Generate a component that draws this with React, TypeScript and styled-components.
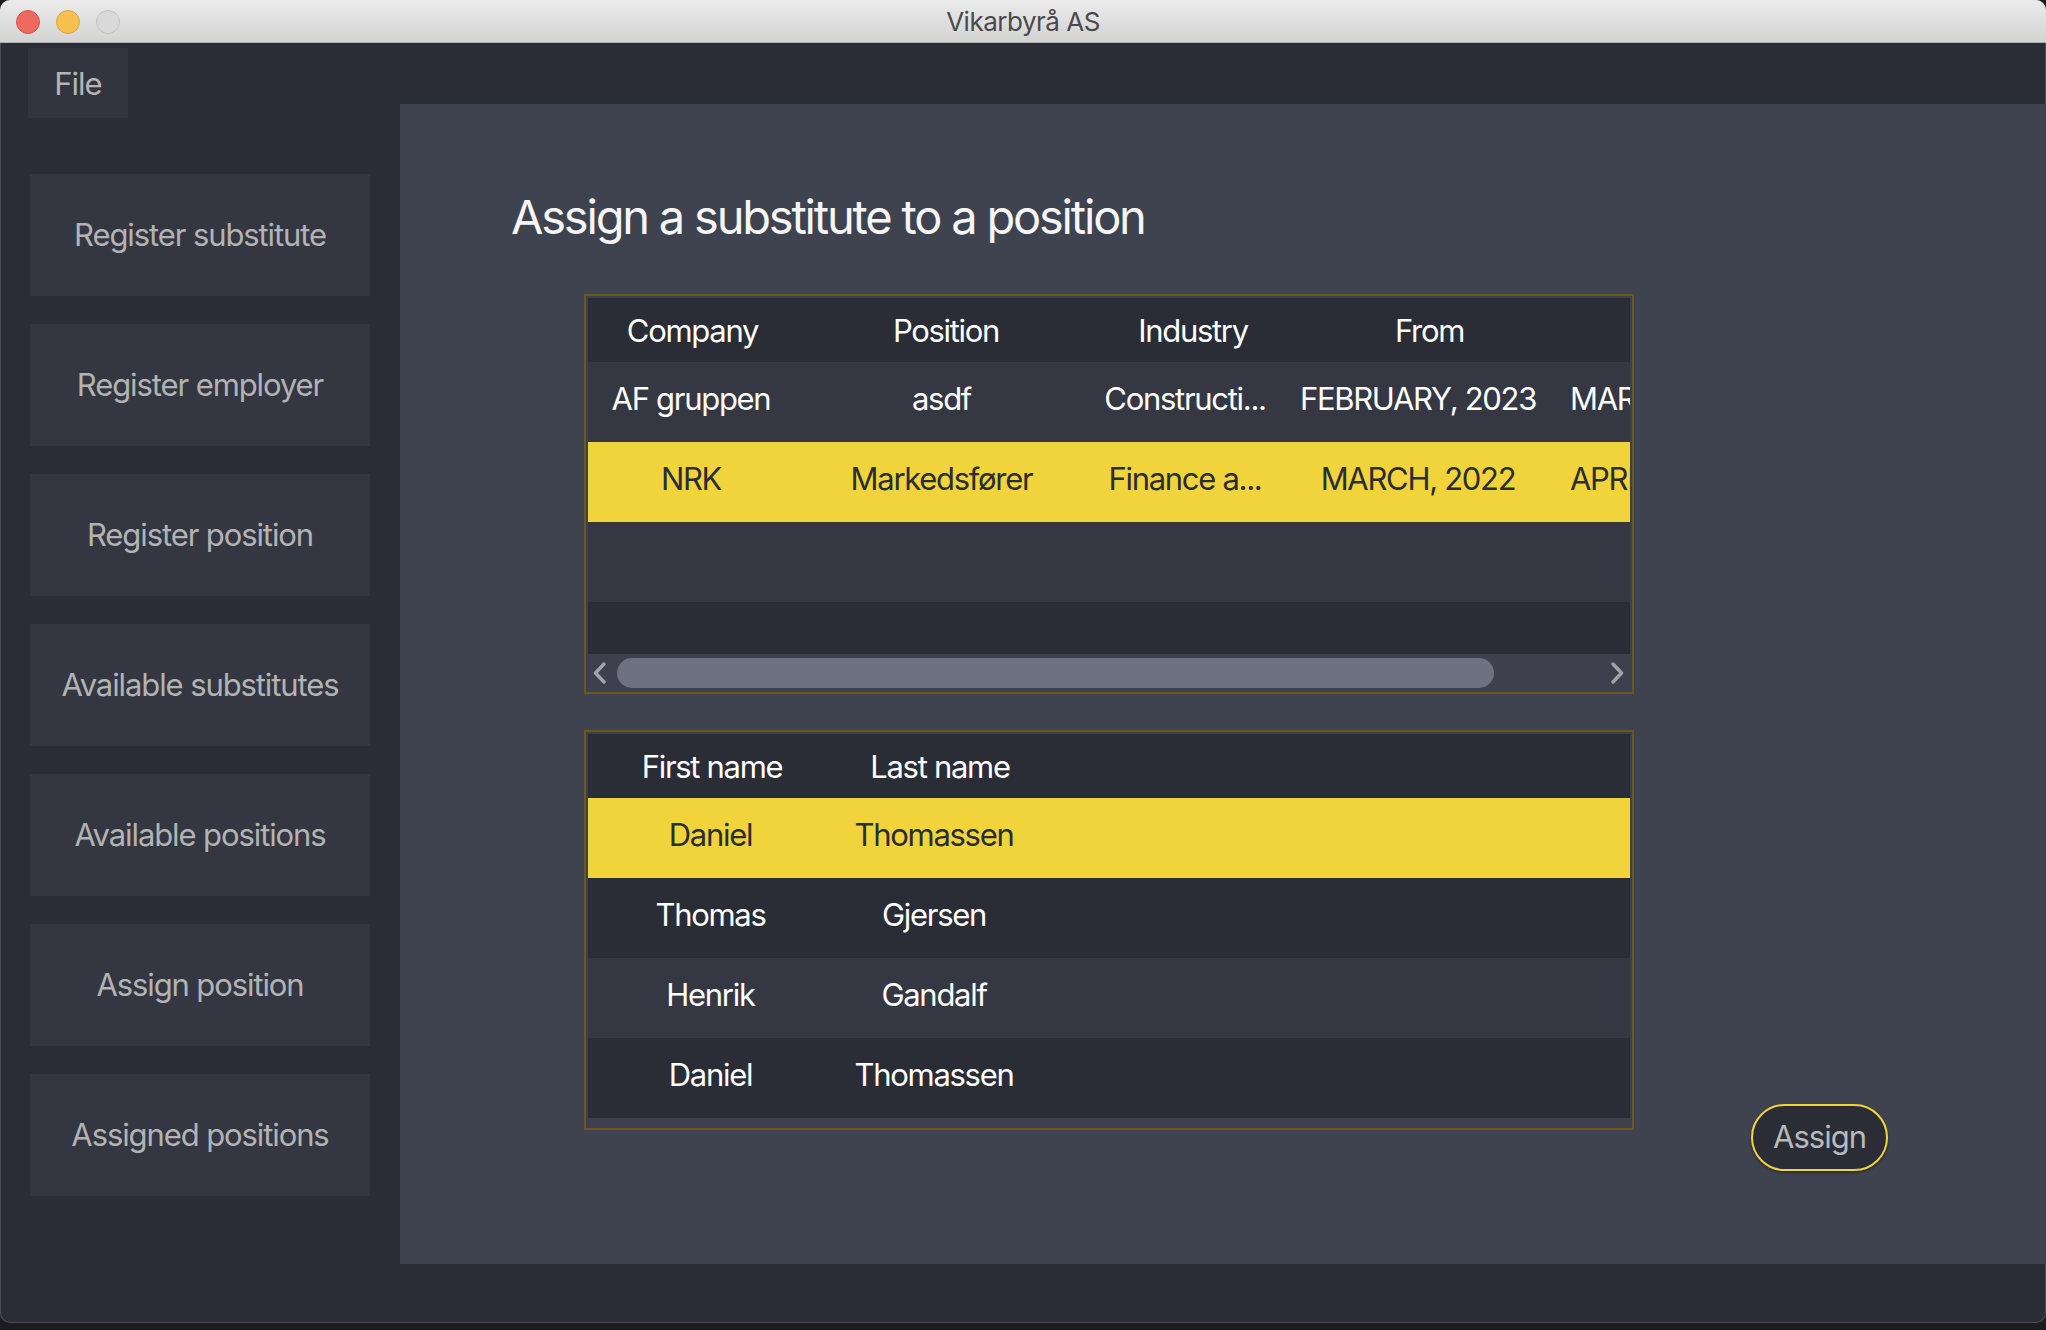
import React from "react"
import styled, { createGlobalStyle } from "styled-components"

const GlobalStyle = createGlobalStyle`
  html, body {
    margin: 0;
    padding: 0;
    background: #1c1c1e;
  }
  body {
    font-family: Inter, "Noto Sans", "Liberation Sans", sans-serif;
    -webkit-font-smoothing: antialiased;
  }
`

const Window = styled.div`
  width: 2046px;
  height: 1323px;
  display: flex;
  flex-direction: column;
  background: #2a2d36;
  border-radius: 10px;
  overflow: hidden;
  box-shadow: inset 0 0 0 1px #4b4e57;
`

const TitleBar = styled.div`
  height: 43px;
  flex-shrink: 0;
  display: grid;
  grid-template-columns: 1fr auto 1fr;
  align-items: center;
  padding-top: 1px;
  background: linear-gradient(#ebebeb, #d3d3d3);
  border-bottom: 1px solid #b1b1b1;
  box-sizing: border-box;
`

const Lights = styled.div`
  display: flex;
  gap: 16px;
  padding-left: 16px;
`

const Light = styled.span<{ $fill: string; $edge: string }>`
  width: 24px;
  height: 24px;
  border-radius: 50%;
  box-sizing: border-box;
  background: ${(p) => p.$fill};
  border: 1px solid ${(p) => p.$edge};
`

const WindowTitle = styled.div`
  font-size: 26px;
  color: #4a4a4a;
  letter-spacing: -0.5px;
`

const Body = styled.div`
  flex: 1;
  display: flex;
  align-items: flex-start;
`

const LeftColumn = styled.div`
  width: 400px;
  flex-shrink: 0;
  box-sizing: border-box;
  padding: 5px 0 0 28px;
`

const MenuItem = styled.div`
  width: 100px;
  height: 70px;
  display: flex;
  align-items: center;
  justify-content: center;
  background: #32353f;
  color: #b5b5b5;
  font-size: 31px;
  letter-spacing: -1px;
`

const Nav = styled.nav`
  margin: 56px 0 0 2px;
  display: flex;
  flex-direction: column;
  gap: 28px;
`

const NavButton = styled.div`
  width: 340px;
  height: 122px;
  display: flex;
  align-items: center;
  justify-content: center;
  padding-bottom: 2px;
  box-sizing: border-box;
  background: #343742;
  color: #b3b3b3;
  font-size: 31px;
  letter-spacing: -1.1px;
`

const Main = styled.main`
  flex: 1;
  height: 1160px;
  margin-top: 61px;
  box-sizing: border-box;
  padding: 89px 0 0 111px;
  background: #3f4350;
`

const Heading = styled.h1`
  margin: 0;
  font-size: 47px;
  line-height: 48px;
  font-weight: 400;
  color: #f5f5f5;
  letter-spacing: -2.2px;
`

const ContentRow = styled.div`
  display: flex;
  align-items: flex-end;
  margin: 53px 0 0 73px;
`

const Tables = styled.div`
  display: flex;
  flex-direction: column;
  gap: 36px;
  margin-bottom: 41px;
`

const TableFrame = styled.div`
  width: 1050px;
  height: 400px;
  box-sizing: border-box;
  border: 2px solid #685a1b;
  padding: 2px;
  background: #3e414d;
  display: flex;
  flex-direction: column;
  overflow: hidden;
`

const Rows = styled.div`
  flex: 1;
  overflow: hidden;
`

const Row = styled.div<{ $tone: "head" | "light" | "dark" | "selected" }>`
  height: ${(p) => (p.$tone === "head" ? 64 : 80)}px;
  box-sizing: border-box;
  padding-bottom: ${(p) => (p.$tone === "head" ? 0 : 7)}px;
  display: flex;
  align-items: center;
  white-space: nowrap;
  background: ${(p) =>
    p.$tone === "selected"
      ? "#f1d33b"
      : p.$tone === "light"
      ? "#353843"
      : "#2a2d36"};
  color: ${(p) => (p.$tone === "selected" ? "#2b2d35" : "#ffffff")};
  font-size: 31px;
  letter-spacing: -1.3px;
`

const Cell = styled.div<{ $w: number; $start?: boolean }>`
  width: ${(p) => p.$w}px;
  flex-shrink: 0;
  box-sizing: border-box;
  text-align: ${(p) => (p.$start ? "left" : "center")};
  padding-left: ${(p) => (p.$start ? 15 : 0)}px;
  overflow: hidden;
`

const ScrollBar = styled.div`
  height: 36px;
  flex-shrink: 0;
  display: flex;
  align-items: center;
  padding: 2px 6px 0 5px;
  box-sizing: border-box;
`

const Track = styled.div`
  flex: 1;
  margin: 0 8px 0 11px;
`

const Thumb = styled.div`
  width: 877px;
  height: 30px;
  border-radius: 15px;
  background: #6e7280;
`

const AssignButton = styled.button`
  width: 137px;
  height: 67px;
  margin-left: 117px;
  box-sizing: border-box;
  border: 2.5px solid #f1d33b;
  border-radius: 34px;
  background: #2a2d36;
  color: #b9b9b9;
  font-family: inherit;
  font-size: 31px;
  letter-spacing: -1px;
  padding: 0 0 2px;
  box-shadow: 0 2px 3px rgba(0, 0, 0, 0.35);
`

const Chevron = ({ dir }: { dir: "left" | "right" }) => (
  <svg width="13" height="22" viewBox="0 0 13 22">
    <polyline
      points={dir === "left" ? "11,2 2.5,11 11,20" : "2,2 10.5,11 2,20"}
      fill="none"
      stroke="#a3a4a8"
      strokeWidth="3.4"
      strokeLinecap="round"
      strokeLinejoin="round"
    />
  </svg>
)

const navItems = [
  "Register substitute",
  "Register employer",
  "Register position",
  "Available substitutes",
  "Available positions",
  "Assign position",
  "Assigned positions",
]

const posHead = [209, 298, 196, 277, 220]
const posCols = [206, 295, 192, 274, 222]
const positions = [
  ["AF gruppen", "asdf", "Constructi...", "FEBRUARY, 2023", "MARCH, 2023"],
  ["NRK", "Markedsfører", "Finance a...", "MARCH, 2022", "APRIL, 2022"],
]

const subHead = [248, 208]
const subCols = [245, 202]
const substitutes = [
  ["Daniel", "Thomassen"],
  ["Thomas", "Gjersen"],
  ["Henrik", "Gandalf"],
  ["Daniel", "Thomassen"],
]

const tone = (i: number, selected: number) =>
  i === selected ? "selected" : i % 2 === 0 ? "light" : "dark"

const App = () => {
  return (
    <>
      <GlobalStyle />
      <Window>
        <TitleBar>
          <Lights>
            <Light $fill="#ee6a5f" $edge="#d8564b" />
            <Light $fill="#f6c04f" $edge="#dca43a" />
            <Light $fill="#d9d9d9" $edge="#c2c2c2" />
          </Lights>
          <WindowTitle>Vikarbyrå AS</WindowTitle>
          <div />
        </TitleBar>
        <Body>
          <LeftColumn>
            <MenuItem>File</MenuItem>
            <Nav>
              {navItems.map((item) => (
                <NavButton key={item}>{item}</NavButton>
              ))}
            </Nav>
          </LeftColumn>
          <Main>
            <Heading>Assign a substitute to a position</Heading>
            <ContentRow>
              <Tables>
                <TableFrame>
                  <Rows>
                    <Row $tone="head">
                      {["Company", "Position", "Industry", "From", "To"].map((h, i) => (
                        <Cell key={h} $w={posHead[i]}>
                          {i < 4 ? h : ""}
                        </Cell>
                      ))}
                    </Row>
                    {[0, 1, 2, 3].map((r) => (
                      <Row key={r} $tone={tone(r, 1)}>
                        {(positions[r] || []).map((v, i) => (
                          <Cell key={i} $w={posCols[i]} $start={i === 4}>
                            {v}
                          </Cell>
                        ))}
                      </Row>
                    ))}
                  </Rows>
                  <ScrollBar>
                    <Chevron dir="left" />
                    <Track>
                      <Thumb />
                    </Track>
                    <Chevron dir="right" />
                  </ScrollBar>
                </TableFrame>
                <TableFrame>
                  <Row $tone="head">
                    <Cell $w={subHead[0]}>First name</Cell>
                    <Cell $w={subHead[1]}>Last name</Cell>
                  </Row>
                  {substitutes.map((s, r) => (
                    <Row key={r} $tone={tone(r, 0)}>
                      {s.map((v, i) => (
                        <Cell key={i} $w={subCols[i]}>
                          {v}
                        </Cell>
                      ))}
                    </Row>
                  ))}
                </TableFrame>
              </Tables>
              <AssignButton>Assign</AssignButton>
            </ContentRow>
          </Main>
        </Body>
      </Window>
    </>
  )
}

export default App
